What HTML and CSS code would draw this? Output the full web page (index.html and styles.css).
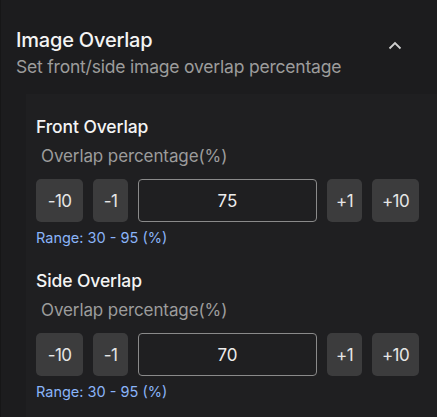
FILE: index.html
```html
<!DOCTYPE html>
<html>
<head>
<meta charset="utf-8">
<link rel="stylesheet" href="styles.css">
</head>
<body>
<div class="panel">
  <div class="header">
    <div class="titles">
      <div class="title">Image Overlap</div>
      <div class="subtitle">Set front/side image overlap percentage</div>
    </div>
    <svg class="chevron" width="14" height="9" viewBox="0 0 14 9"><path d="M1.5 7.5 L7 2 L12.5 7.5" fill="none" stroke="#cfcfcf" stroke-width="1.8"/></svg>
  </div>
  <div class="body">
    <div class="group">
      <div class="group-title">Front Overlap</div>
      <div class="label">Overlap percentage(%)</div>
      <div class="controls">
        <button class="btn wide">-10</button>
        <button class="btn">-1</button>
        <div class="input">75</div>
        <button class="btn">+1</button>
        <button class="btn wide">+10</button>
      </div>
      <div class="range">Range: 30 - 95 (%)</div>
    </div>
    <div class="group">
      <div class="group-title">Side Overlap</div>
      <div class="label">Overlap percentage(%)</div>
      <div class="controls">
        <button class="btn wide">-10</button>
        <button class="btn">-1</button>
        <div class="input">70</div>
        <button class="btn">+1</button>
        <button class="btn wide">+10</button>
      </div>
      <div class="range">Range: 30 - 95 (%)</div>
    </div>
  </div>
</div>
</body>
</html>
```

FILE: styles.css
```css
html, body {
  margin: 0;
  padding: 0;
  background: #1c1c1e;
  font-family: Inter, "Noto Sans", sans-serif;
  width: 437px;
  height: 417px;
  overflow: hidden;
}
.panel {
  border-left: 1px solid #161617;
  height: 417px;
  display: flex;
  flex-direction: column;
}
.header {
  display: flex;
  align-items: flex-start;
  justify-content: space-between;
  padding: 28px 35px 0 15px;
  height: 66px;
  flex: none;
}
.title {
  color: #f4f4f4;
  font-size: 20px;
  font-weight: 500;
  line-height: 24px;
  letter-spacing: -0.2px;
}
.subtitle {
  color: #9c9c9c;
  font-size: 17.5px;
  line-height: 24px;
  margin-top: 3px;
  letter-spacing: -0.2px;
}
.chevron {
  margin-top: 13px;
}
.body {
  margin-left: 25px;
  background: #1f1f21;
  padding: 22px 0 0 10px;
  flex: 1;
}
.group {
  height: 154px;
}
.group-title {
  color: #f4f4f4;
  font-size: 17.5px;
  font-weight: 500;
  line-height: 22px;
  letter-spacing: -0.1px;
}
.label {
  color: #9c9c9c;
  font-size: 17px;
  line-height: 22px;
  margin-top: 7px;
  padding-left: 5px;
  letter-spacing: -0.1px;
}
.controls {
  display: flex;
  gap: 10px;
  margin-top: 12px;
  height: 43px;
}
.btn {
  border: none;
  background: #3c3c3d;
  color: #e6e6e6;
  font-family: inherit;
  font-size: 17px;
  border-radius: 5px;
  width: 35px;
  height: 43px;
  padding: 0;
  letter-spacing: -0.6px;
}
.btn.wide {
  width: 47px;
}
.input {
  width: 177px;
  height: 41px;
  border: 1px solid #8a8a8a;
  border-radius: 4px;
  color: #ececec;
  font-size: 17px;
  display: flex;
  align-items: center;
  justify-content: center;
}
.range {
  color: #8ab4f8;
  font-size: 14.5px;
  line-height: 18px;
  margin-top: 7px;
}
```
